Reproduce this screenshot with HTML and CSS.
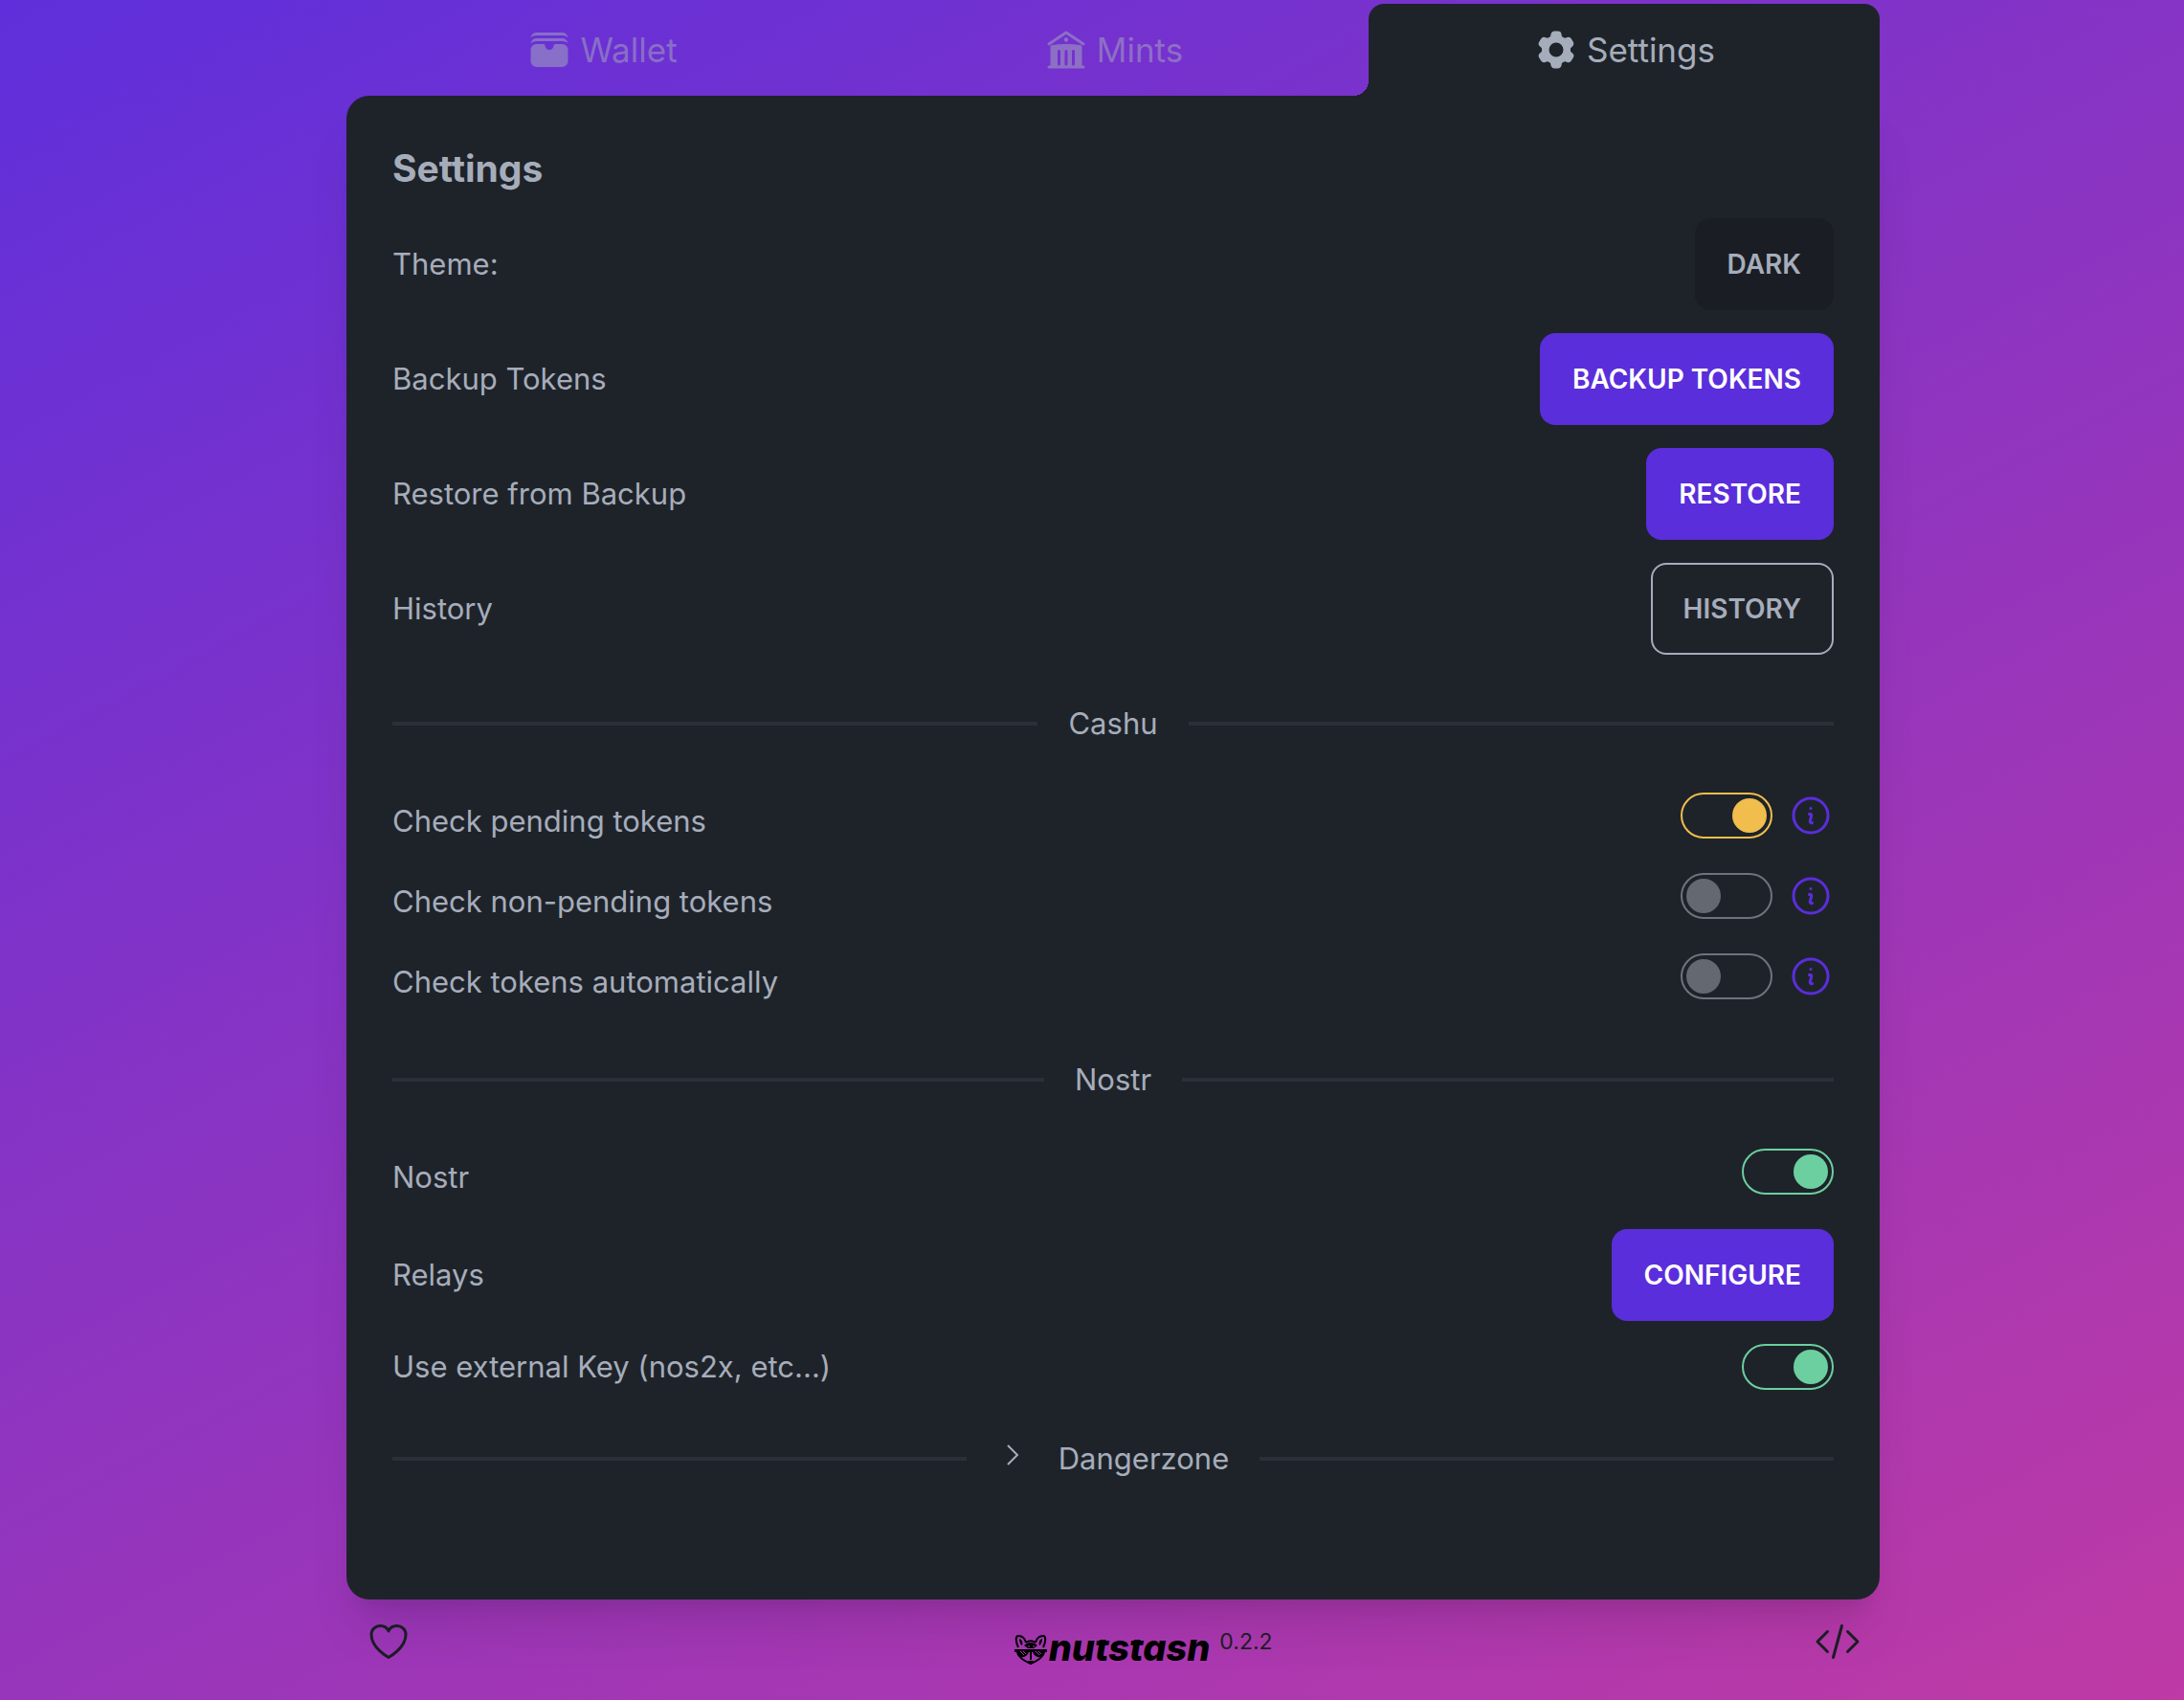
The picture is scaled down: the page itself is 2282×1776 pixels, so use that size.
FILE: index.html
```html
<!DOCTYPE html>
<html lang="en">
<head>
    <meta charset="UTF-8">
    <meta name="viewport" content="width=device-width, initial-scale=1.0">
    <title>Nutstash</title>
    <link rel="stylesheet" href="styles.css">
</head>
<body>
    <div class="app">
        <nav class="tabs">
            <a class="tab" href="#wallet">
                <svg class="icon" viewBox="0 0 24 24" fill="currentColor">
                    <path d="M2.273 5.625A4.483 4.483 0 0 1 5.25 4.5h13.5c1.141 0 2.183.425 2.977 1.125A3 3 0 0 0 18.75 3H5.25a3 3 0 0 0-2.977 2.625ZM2.273 8.625A4.483 4.483 0 0 1 5.25 7.5h13.5c1.141 0 2.183.425 2.977 1.125A3 3 0 0 0 18.75 6H5.25a3 3 0 0 0-2.977 2.625ZM5.25 9a3 3 0 0 0-3 3v6a3 3 0 0 0 3 3h13.5a3 3 0 0 0 3-3v-6a3 3 0 0 0-3-3H15a.75.75 0 0 0-.75.75 2.25 2.25 0 0 1-4.5 0A.75.75 0 0 0 9 9H5.25Z"/>
                </svg>
                Wallet
            </a>
            <a class="tab" href="#mints">
                <svg class="icon" viewBox="0 0 24 24" fill="currentColor">
                    <path d="M11.584 2.376a.75.75 0 0 1 .832 0l9 6a.75.75 0 1 1-.832 1.248L12 3.901 3.416 9.624a.75.75 0 0 1-.832-1.248l9-6Z"/>
                    <path fill-rule="evenodd" d="M20.25 10.332v9.918H21a.75.75 0 0 1 0 1.5H3a.75.75 0 0 1 0-1.5h.75v-9.918a.75.75 0 0 1 .634-.74A49.109 49.109 0 0 1 12 9c2.59 0 5.134.202 7.616.592a.75.75 0 0 1 .634.74Zm-7.5 2.418a.75.75 0 0 0-1.5 0v6.75a.75.75 0 0 0 1.5 0v-6.75Zm3-.75a.75.75 0 0 1 .75.75v6.75a.75.75 0 0 1-1.5 0v-6.75a.75.75 0 0 1 .75-.75ZM9 12.75a.75.75 0 0 0-1.5 0v6.75a.75.75 0 0 0 1.5 0v-6.75Z"/>
                    <path d="M12 7.875a1.125 1.125 0 1 0 0-2.25 1.125 1.125 0 0 0 0 2.25Z"/>
                </svg>
                Mints
            </a>
            <a class="tab tab-active" href="#settings">
                <svg class="icon" viewBox="0 0 24 24" fill="currentColor">
                    <path fill-rule="evenodd" d="M11.078 2.25c-.917 0-1.699.663-1.85 1.567L9.05 4.889c-.02.12-.115.26-.297.348a7.493 7.493 0 0 0-.986.57c-.166.115-.334.126-.45.083L6.3 5.508a1.875 1.875 0 0 0-2.282.819l-.922 1.597a1.875 1.875 0 0 0 .432 2.385l.84.692c.095.078.17.229.154.43a7.598 7.598 0 0 0 0 1.139c.015.2-.059.352-.153.43l-.841.692a1.875 1.875 0 0 0-.432 2.385l.922 1.597a1.875 1.875 0 0 0 2.282.818l1.019-.382c.115-.043.283-.031.45.082.312.214.641.405.985.57.182.088.277.228.297.35l.178 1.071c.151.904.933 1.567 1.85 1.567h1.844c.916 0 1.699-.663 1.85-1.567l.178-1.072c.02-.12.114-.26.297-.349.344-.165.673-.356.985-.57.167-.114.335-.125.45-.082l1.02.382a1.875 1.875 0 0 0 2.28-.819l.923-1.597a1.875 1.875 0 0 0-.432-2.385l-.84-.692c-.095-.078-.17-.229-.154-.43a7.614 7.614 0 0 0 0-1.139c-.016-.2.059-.352.153-.43l.84-.692c.708-.582.891-1.59.433-2.385l-.922-1.597a1.875 1.875 0 0 0-2.282-.818l-1.02.382c-.114.043-.282.031-.449-.083a7.49 7.49 0 0 0-.985-.57c-.183-.087-.277-.227-.297-.348l-.179-1.072a1.875 1.875 0 0 0-1.85-1.567h-1.843ZM12 15.75a3.75 3.75 0 1 0 0-7.5 3.75 3.75 0 0 0 0 7.5Z"/>
                </svg>
                Settings
            </a>
        </nav>

        <main class="panel">
            <h1 class="title">Settings</h1>

            <div class="row">
                <span>Theme:</span>
                <button class="btn btn-dark">DARK</button>
            </div>
            <div class="row">
                <span>Backup Tokens</span>
                <button class="btn btn-primary">BACKUP TOKENS</button>
            </div>
            <div class="row">
                <span>Restore from Backup</span>
                <button class="btn btn-primary">RESTORE</button>
            </div>
            <div class="row">
                <span>History</span>
                <button class="btn btn-outline">HISTORY</button>
            </div>

            <div class="divider">Cashu</div>

            <div class="row row-option">
                <label for="checkPending">Check pending tokens</label>
                <div class="controls">
                    <input type="checkbox" id="checkPending" class="toggle toggle-warning" checked>
                    <button class="info" aria-label="Info">
                        <svg class="icon" viewBox="0 0 24 24"><use href="#infoIcon"/></svg>
                    </button>
                </div>
            </div>
            <div class="row row-option">
                <label for="checkNonPending">Check non-pending tokens</label>
                <div class="controls">
                    <input type="checkbox" id="checkNonPending" class="toggle toggle-warning">
                    <button class="info" aria-label="Info">
                        <svg class="icon" viewBox="0 0 24 24"><use href="#infoIcon"/></svg>
                    </button>
                </div>
            </div>
            <div class="row row-option">
                <label for="checkAuto">Check tokens automatically</label>
                <div class="controls">
                    <input type="checkbox" id="checkAuto" class="toggle toggle-warning">
                    <button class="info" aria-label="Info">
                        <svg class="icon" viewBox="0 0 24 24"><use href="#infoIcon"/></svg>
                    </button>
                </div>
            </div>

            <div class="divider">Nostr</div>

            <div class="row row-option">
                <label for="useNostr">Nostr</label>
                <div class="controls">
                    <input type="checkbox" id="useNostr" class="toggle toggle-success" checked>
                </div>
            </div>
            <div class="row">
                <span>Relays</span>
                <button class="btn btn-primary">CONFIGURE</button>
            </div>
            <div class="row">
                <label for="externalKey">Use external Key (nos2x, etc...)</label>
                <input type="checkbox" id="externalKey" class="toggle toggle-success" checked>
            </div>

            <div class="divider">
                <button class="danger-toggle">
                    <svg class="chevron" viewBox="0 0 24 24">
                        <path d="m8.25 4.5 7.5 7.5-7.5 7.5"/>
                    </svg>
                    Dangerzone
                </button>
            </div>
        </main>

        <footer class="footer">
            <a class="footer-link" href="#donate" aria-label="Donate">
                <svg class="icon icon-line" viewBox="0 0 24 24">
                    <path d="M21 8.25c0-2.485-2.099-4.5-4.688-4.5-1.935 0-3.597 1.126-4.312 2.733-.715-1.607-2.377-2.733-4.313-2.733C5.1 3.75 3 5.765 3 8.25c0 7.22 9 12 9 12s9-4.78 9-12Z"/>
                </svg>
            </a>
            <div class="logo">
                <svg class="raccoon" viewBox="0 0 34 32">
                    <!-- ears -->
                    <path class="raccoon-line" d="M4 14C1 8 1 2 4 2c4 0 7 3 8 7M30 14c3-6 3-12 0-12-4 0-7 3-8 7M12 9c3-2 7-2 10 0"/>
                    <path d="M5 5c3 1 4 4 3 7-2-1-3-4-3-7ZM29 5c-3 1-4 4-3 7 2-1 3-4 3-7Z"/>
                    <!-- forehead and glasses -->
                    <path d="M10 12c4-4 10-4 14 0l-4 3h-6Z"/>
                    <path d="M0 16h34v3h-2c-1 5-4 6-8 5-3-1-4-3-5-5h-4c-1 2-2 4-5 5-4 1-7 0-8-5H0Z"/>
                    <!-- muzzle -->
                    <path class="raccoon-line" d="M5 23c3 4 7 6 12 8 5-2 9-4 12-8M17 19v8"/>
                    <path d="M14 28h6l-3 4Z"/>
                    <path class="raccoon-shine" d="m6 18 4 4M9 18l3 3M22 18l4 4M25 18l3 3M14 13h2M19 13h2"/>
                </svg>
                <span class="wordmark">nutstash</span>
            </div>
            <div class="footer-end">
                <span class="version">0.2.2</span>
                <a class="footer-link" href="#source" aria-label="Source code">
                    <svg class="icon icon-line" viewBox="0 0 24 24">
                        <path d="M17.25 6.75 22.5 12l-5.25 5.25m-10.5 0L1.5 12l5.25-5.25m7.5-3-4.5 16.5"/>
                    </svg>
                </a>
            </div>
        </footer>
    </div>

    <svg class="sprite" aria-hidden="true">
        <symbol id="infoIcon" viewBox="0 0 24 24">
            <path d="m11.25 11.25.041-.02a.75.75 0 0 1 1.063.852l-.708 2.836a.75.75 0 0 0 1.063.853l.041-.021M21 12a9 9 0 1 1-18 0 9 9 0 0 1 18 0Zm-9-3.75h.008v.008H12V8.25Z" fill="none" stroke="currentColor" stroke-width="1.5" stroke-linecap="round" stroke-linejoin="round"/>
        </symbol>
    </svg>
</body>
</html>
```
FILE: styles.css
```css
* {
    box-sizing: border-box;
}
body {
    margin: 0;
    min-height: 100vh;
    padding-left: 44px;
    background: linear-gradient(152deg, #5f2fdb, #be3aa5);
    font-family: Inter, "Liberation Sans", sans-serif;
    font-size: 31px;
    line-height: 48px;
    color: #a6adba;
}
button {
    font: inherit;
    color: inherit;
    border: none;
    background: none;
    padding: 0;
    cursor: pointer;
}
.app {
    max-width: 1602px;
    margin: 0 auto;
    padding-top: 4px;
}
.icon {
    display: block;
    width: 48px;
    height: 48px;
}
.icon-line {
    fill: none;
    stroke: currentColor;
    stroke-width: 1.5;
    stroke-linecap: round;
    stroke-linejoin: round;
}
.sprite {
    position: absolute;
    width: 0;
    height: 0;
}

/* tabs */
.tabs {
    display: grid;
    grid-template-columns: repeat(3, 1fr);
}
.tab {
    display: flex;
    justify-content: center;
    align-items: center;
    gap: 8px;
    height: 96px;
    font-size: 35px;
    color: rgba(166, 173, 186, 0.5);
    text-decoration: none;
}
.tab-active {
    position: relative;
    color: #a6adba;
    background-color: #1e232a;
    border-radius: 16px 16px 0 0;
}
/* curve where the active tab meets the panel */
.tab-active::before {
    content: "";
    position: absolute;
    left: -16px;
    bottom: 0;
    width: 16px;
    height: 16px;
    background: radial-gradient(circle at top left, transparent 16px, #1e232a 16px);
}

/* panel */
.panel {
    display: flex;
    flex-direction: column;
    gap: 24px;
    padding: 48px 48px 99px;
    background-color: #1e232a;
    border-radius: 24px 0 24px 24px;
    box-shadow: 0 40px 50px -10px rgba(0, 0, 0, 0.1), 0 16px 20px -12px rgba(0, 0, 0, 0.1);
}
.title {
    margin: 0;
    font-size: 39px;
    line-height: 56px;
    font-weight: 700;
}
.row {
    display: flex;
    justify-content: space-between;
    align-items: center;
}
.row-option {
    min-height: 60px;
}
.controls {
    display: flex;
    align-self: flex-start;
    gap: 16px;
}
.btn {
    height: 96px;
    padding: 0 32px;
    border: 2px solid transparent;
    border-radius: 16px;
    font-size: 28px;
    font-weight: 600;
}
.btn-dark {
    background-color: #1a1d24;
}
.btn-primary {
    background-color: #5a2edb;
    color: #ffffff;
}
.btn-outline {
    border-color: #a6adba;
}
.info {
    color: #5a2edb;
}

.toggle {
    appearance: none;
    width: 96px;
    height: 48px;
    margin: 0;
    padding: 4px;
    border: 2px solid #6f737c;
    border-radius: 24px;
    cursor: pointer;
}
.toggle::before {
    content: "";
    display: block;
    width: 36px;
    height: 36px;
    border-radius: 50%;
    background-color: #646871;
}
.toggle:checked::before {
    margin-left: auto;
    background-color: currentColor;
}
.toggle:checked {
    border-color: currentColor;
}
.toggle-warning {
    color: #f1bd4c;
}
.toggle-success {
    color: #6ccf9f;
}

.divider {
    display: flex;
    align-items: center;
    gap: 32px;
    height: 96px;
}
.divider::before, .divider::after {
    content: "";
    flex: 1;
    height: 4px;
    background-color: #2b2f37;
}
.danger-toggle {
    display: flex;
    align-items: center;
    gap: 32px;
}
.chevron {
    width: 32px;
    height: 32px;
    margin-bottom: 8px;
    fill: none;
    stroke: currentColor;
    stroke-width: 1.5;
}

/* footer */
.footer {
    display: grid;
    grid-template-columns: 1fr auto 1fr;
    padding: 20px;
    color: #1a1d24;
}
.footer-link {
    color: inherit;
}
.logo {
    display: flex;
    align-items: flex-end;
    gap: 2px;
    color: #000000;
}
.raccoon {
    width: 34px;
    height: 32px;
    fill: currentColor;
}
.raccoon-line {
    fill: none;
    stroke: currentColor;
    stroke-width: 2;
}
.raccoon-shine {
    stroke: #a336b6;
    stroke-width: 1;
}
/* the logo lettering has its ascenders cut at the x-height */
.wordmark {
    display: flex;
    align-items: flex-end;
    height: 26px;
    padding-right: 2px;
    overflow: hidden;
    font-size: 38px;
    line-height: 36px;
    font-weight: 800;
    font-style: italic;
}
.footer-end {
    display: flex;
    justify-content: space-between;
    padding-left: 8px;
}
.version {
    font-size: 23px;
    line-height: 48px;
}
```
